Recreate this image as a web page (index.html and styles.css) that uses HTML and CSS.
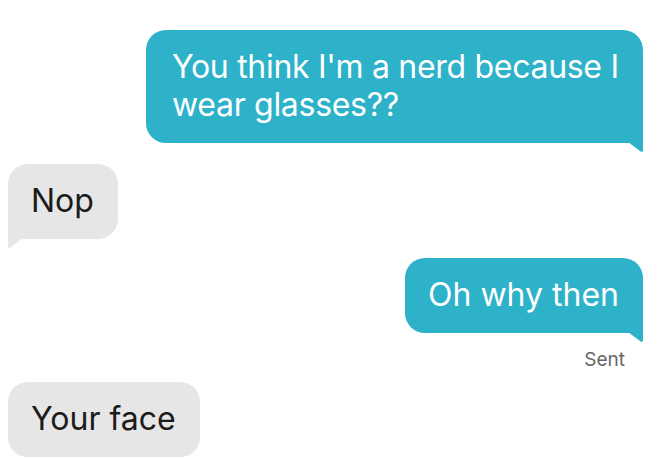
FILE: index.html
```html
<!DOCTYPE html>
<html>
<head>
<meta charset="utf-8">
<link rel="stylesheet" href="styles.css">
</head>
<body>
<div class="chat">
  <div class="row sent-row first">
    <div class="bubble out tail">You think I'm a nerd because I wear glasses??</div>
  </div>
  <div class="row recv-row gap1">
    <div class="bubble in tail">Nop</div>
  </div>
  <div class="row sent-row gap2">
    <div class="bubble out tail">Oh why then</div>
  </div>
  <div class="status">Sent</div>
  <div class="row recv-row gap3">
    <div class="bubble in">Your face</div>
  </div>
</div>
</body>
</html>
```

FILE: styles.css
```css
html, body {
  margin: 0;
  padding: 0;
  background: #ffffff;
}
body {
  font-family: Inter, "Noto Sans", sans-serif;
  overflow: hidden;
}
.chat {
  display: flex;
  flex-direction: column;
  padding: 30px 14px 0 8px;
}
.row {
  display: flex;
}
.sent-row {
  justify-content: flex-end;
}
.recv-row {
  justify-content: flex-start;
}
.gap1 { margin-top: 21px; }
.gap2 { margin-top: 19px; }
.gap3 { margin-top: 12px; }
.first .bubble {
  width: 497px;
  box-sizing: border-box;
  padding-left: 26px;
  padding-right: 14px;
  letter-spacing: -0.3px;
}
.bubble {
  position: relative;
  font-size: 32px;
  line-height: 38px;
  padding: 18px 24px 19px 23px;
  border-radius: 20px;
}
.out {
  background: #2db2c9;
  color: #ffffff;
}
.in {
  background: #e6e6e6;
  color: #1b1b1b;
}
.out.tail {
  border-bottom-right-radius: 0;
}
.in.tail {
  border-bottom-left-radius: 0;
}
.out.tail::after {
  content: "";
  position: absolute;
  right: 0;
  bottom: -9px;
  width: 15px;
  height: 10px;
  background: #2db2c9;
  clip-path: polygon(0 0, 100% 0, 100% 88%, 92% 100%, 84% 96%);
}
.in.tail::after {
  content: "";
  position: absolute;
  left: 0;
  bottom: -9px;
  width: 15px;
  height: 10px;
  background: #e6e6e6;
  clip-path: polygon(0 0, 100% 0, 16% 96%, 8% 100%, 0 88%);
}
.status {
  align-self: flex-end;
  font-size: 19px;
  line-height: 20px;
  color: #666666;
  margin-top: 17px;
  margin-right: 18px;
}
```
